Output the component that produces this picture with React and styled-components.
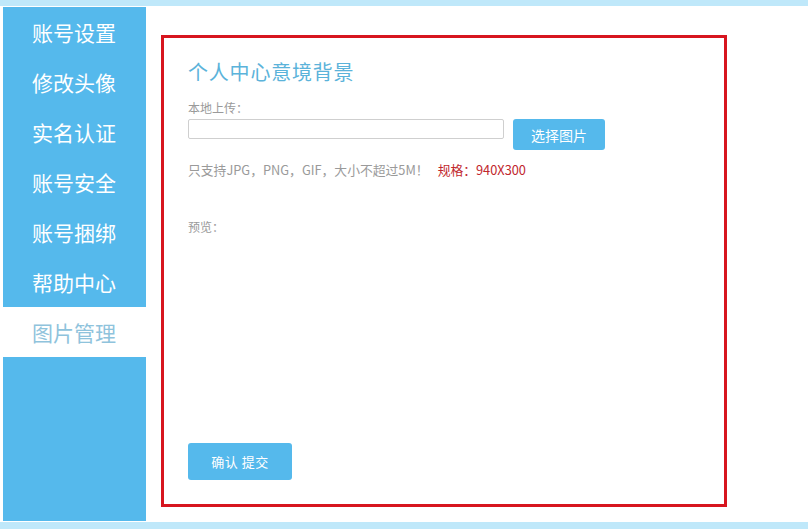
import React from "react";
import styled, { createGlobalStyle } from "styled-components";

const Global = createGlobalStyle`
  html, body { margin: 0; padding: 0; background: #fff; }
  body { font-family: "Noto Sans CJK SC", "Noto Sans", sans-serif; }
  * { box-sizing: border-box; }
`;

const Page = styled.div`
  width: 808px;
  height: 529px;
  display: flex;
  flex-direction: column;
  overflow: hidden;
`;

const Strip = styled.div`
  height: ${(p) => p.$h}px;
  background: #bfe8fa;
  flex: none;
`;

const Body = styled.div`
  flex: 1;
  display: flex;
  padding: 1px 0 1px 3px;
  min-height: 0;
`;

const Sidebar = styled.nav`
  width: 143px;
  background: #55b9ec;
  display: flex;
  flex-direction: column;
`;

const NavItem = styled.div`
  height: 50px;
  display: flex;
  align-items: center;
  padding-left: 29px;
  font-size: 21px;
  color: ${(p) => (p.$active ? "#8fc3dc" : "#ffffff")};
  background: ${(p) => (p.$active ? "#ffffff" : "transparent")};
`;

const Main = styled.main`
  flex: 1;
  padding: 28px 0 0 15px;
`;

const Box = styled.section`
  width: 566px;
  height: 472px;
  border: 3px solid #d7151f;
  padding: 22px 0 0 24px;
  display: flex;
  flex-direction: column;
`;

const Title = styled.h2`
  margin: 0;
  font-size: 20px;
  line-height: 24px;
  font-weight: normal;
  color: #5bb3da;
  letter-spacing: 0.8px;
`;

const Label = styled.div`
  margin-top: ${(p) => p.$mt}px;
  font-size: 12px;
  line-height: 16px;
  color: #9a9a9a;
`;

const Row = styled.div`
  margin-top: 3px;
  display: flex;
  align-items: flex-start;
  gap: 9px;
`;

const TextInput = styled.input`
  width: 316px;
  height: 20px;
  border: 1px solid #cfcfcf;
  border-radius: 2px;
  padding: 0 4px;
  outline: none;
  margin: 0;
`;

const Button = styled.button`
  width: ${(p) => p.$w}px;
  height: ${(p) => p.$h}px;
  border: none;
  border-radius: 3px;
  background: #55b9ec;
  color: #ffffff;
  font-family: inherit;
  font-size: ${(p) => p.$fs}px;
  letter-spacing: ${(p) => p.$ls || 0}px;
  padding: 0;
  cursor: pointer;
`;

const Hint = styled.div`
  margin-top: 11px;
  font-size: 12.8px;
  line-height: 18px;
  color: #9a9a9a;
  display: flex;
  gap: 9px;
`;

const Spec = styled.span`
  color: #c1272d;
`;

const Spacer = styled.div`
  flex: 1;
`;

const Footer = styled.div`
  padding-bottom: 24px;
`;

const items = ["账号设置", "修改头像", "实名认证", "账号安全", "账号捆绑", "帮助中心", "图片管理"];

export default function App() {
  return (
    <>
      <Global />
      <Page>
        <Strip $h={6} />
        <Body>
          <Sidebar>
            {items.map((t) => (
              <NavItem key={t} $active={t === "图片管理"}>
                {t}
              </NavItem>
            ))}
          </Sidebar>
          <Main>
            <Box>
              <Title>个人中心意境背景</Title>
              <Label $mt={16}>本地上传：</Label>
              <Row>
                <TextInput type="text" />
                <Button $w={92} $h={31} $fs={14}>选择图片</Button>
              </Row>
              <Hint>
                <span>只支持JPG，PNG，GIF，大小不超过5M！</span>
                <Spec>规格：940X300</Spec>
              </Hint>
              <Label $mt={40}>预览：</Label>
              <Spacer />
              <Footer>
                <Button $w={104} $h={37} $fs={13} $ls={0.5}>确认 提交</Button>
              </Footer>
            </Box>
          </Main>
        </Body>
        <Strip $h={7} />
      </Page>
    </>
  );
}
